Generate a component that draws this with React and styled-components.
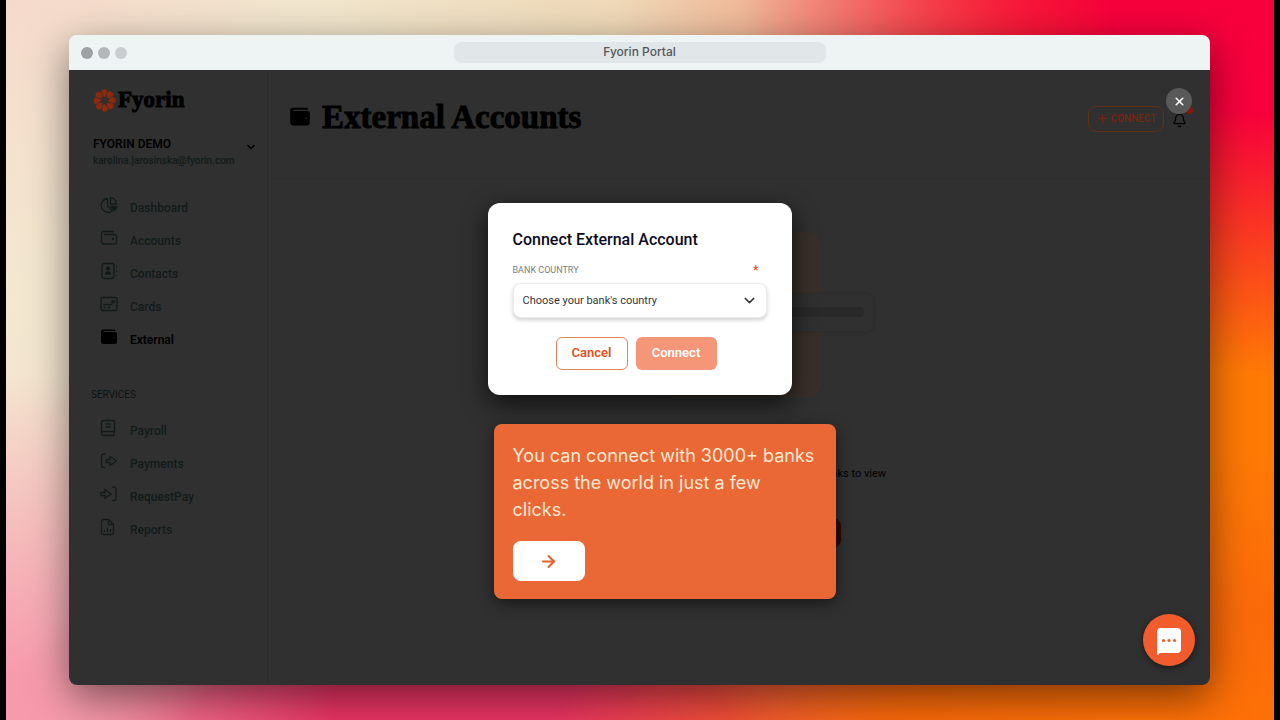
import styled, { createGlobalStyle } from 'styled-components';
import { ArrowRight, Bell, ChevronDown, Plus, X } from 'lucide-react';

const GlobalStyle = createGlobalStyle`
    * {
        box-sizing: border-box;
    }

    body {
        margin: 0;
        font-family: 'Inter', sans-serif;
    }

    button,
    select {
        font-family: inherit;
        margin: 0;
        cursor: pointer;
    }
`;

const Page = styled.div`
    display: flex;
    min-height: 100vh;
    padding: 35px 64px 35px 63px;
    border: solid #000;
    border-width: 0 6px;
    background:
        radial-gradient(ellipse 42% 52% at 100% 0%, #f7003c 0%, #f7003c 30%, rgba(247, 0, 60, 0) 100%),
        radial-gradient(ellipse 26% 48% at 0% 100%, #f79aac 0%, #f79aac 12%, rgba(247, 154, 172, 0) 100%),
        radial-gradient(ellipse 54% 45% at 96% 108%, #ff7405 0%, #fb6a0a 50%, rgba(240, 70, 30, 0) 100%),
        radial-gradient(ellipse 38% 40% at 36% 108%, #ea3464 0%, #ea3464 60%, rgba(234, 52, 100, 0) 100%),
        radial-gradient(ellipse 20% 45% at 0% 42%, #f3e8d0 0%, rgba(243, 232, 208, 0) 100%),
        linear-gradient(100deg, #f6d8cb 0%, #f1e6cd 22%, #efd9b8 44%, #f0a080 60%, #fb5a2c 74%, #ff7a05 88%);
`;

const Window = styled.div`
    display: flex;
    flex-direction: column;
    flex: 1;
    min-width: 0;
    border-radius: 8px;
    box-shadow: 0 12px 40px rgba(0, 0, 0, 0.5);
    overflow: hidden;
`;

const TitleBar = styled.header`
    display: grid;
    grid-template-columns: 1fr minmax(0, 372px) 1fr;
    align-items: center;
    height: 35px;
    padding: 0 12px;
    background: #eef3f4;
`;

const Dots = styled.div`
    display: flex;
    gap: 5px;
`;

const Dot = styled.span`
    width: 12px;
    height: 12px;
    border-radius: 50%;
    background: ${({ $color }) => $color};
`;

const Address = styled.div`
    height: 21px;
    border-radius: 8px;
    background: #e1e6e8;
    color: #53585c;
    font-size: 12px;
    font-weight: 500;
    line-height: 20px;
    text-align: center;
`;

const Body = styled.div`
    position: relative;
    display: grid;
    grid-template-columns: 199px 1fr;
    flex: 1;
    background: #303030;
    font-family: Roboto, sans-serif;
`;

const Sidebar = styled.aside`
    border-right: 1px solid #2b2b2b;
    padding: 17px 10px 0 22px;
`;

const Logo = styled.div`
    display: flex;
    align-items: center;
    gap: 2px;
    height: 26px;
    padding-left: 2px;
    color: #000;
    font-family: 'Liberation Serif', serif;
    font-size: 23px;
    font-weight: 700;
    -webkit-text-stroke: 1px #000;
`;

const Account = styled.div`
    display: flex;
    align-items: flex-start;
    justify-content: space-between;
    margin-top: 22px;
    padding-left: 2px;
    color: #000;

    svg {
        flex: none;
        margin-top: 6px;
    }
`;

const AccountName = styled.div`
    font-size: 12px;
    font-weight: 600;
    line-height: 18px;
`;

const AccountMail = styled.div`
    color: #111b1a;
    font-size: 10px;
    font-weight: 500;
    line-height: 16px;
`;

const Nav = styled.nav`
    display: flex;
    flex-direction: column;
    margin-top: ${({ $top }) => $top}px;
`;

const NavLink = styled.a`
    display: flex;
    align-items: center;
    gap: 12px;
    height: 33px;
    padding-left: 9px;
    color: ${({ $active }) => ($active ? '#000' : '#121b1a')};
    font-size: 12px;
    font-weight: ${({ $active }) => ($active ? 600 : 500)};
    text-decoration: none;

    svg {
        margin-bottom: 6px;
    }
`;

const NavTitle = styled.h2`
    margin: 32px 0 0;
    color: #0c1211;
    font-size: 10px;
    font-weight: 400;
    line-height: 14px;
`;

const Main = styled.main`
    display: flex;
    flex-direction: column;
    min-width: 0;
`;

const Header = styled.div`
    display: flex;
    align-items: center;
    height: 109px;
    padding: 0 23px 15px 21px;
    border-bottom: 1px solid #2e2e2e;
`;

const Title = styled.h1`
    flex: 1;
    margin: 0 0 0 11px;
    color: #000;
    font-family: 'Liberation Serif', serif;
    font-size: 33px;
    font-weight: 700;
    line-height: 40px;
    -webkit-text-stroke: 1px #000;
`;

const HeaderActions = styled.div`
    display: flex;
    align-items: center;
    gap: 8px;
    padding-top: 4px;
`;

const HeaderButton = styled.button`
    display: flex;
    align-items: center;
    justify-content: center;
    gap: 2px;
    width: 76px;
    height: 26px;
    padding: 0;
    border: 1px solid #5f3015;
    border-radius: 8px;
    background: transparent;
    color: #782610;
    font-size: 10px;
    font-weight: 500;
`;

const BellButton = styled.button`
    position: relative;
    display: flex;
    padding: 4px 0 0;
    border: 0;
    background: transparent;
    color: #000;
`;

const BellDot = styled.span`
    position: absolute;
    top: -2px;
    right: -6px;
    width: 7px;
    height: 7px;
    border-radius: 50%;
    background: #86180f;
`;

const Empty = styled.div`
    display: flex;
    flex-direction: column;
    align-items: center;
    padding-top: 53px;
`;

const Picture = styled.div`
    display: flex;
    align-items: center;
    justify-content: center;
    width: 166px;
    height: 166px;
    padding-bottom: 6px;
    border-radius: 16px;
    background: #38302b;
`;

const PictureCard = styled.div`
    display: flex;
    align-items: center;
    flex: none;
    width: 268px;
    height: 37px;
    padding: 0 9px;
    border-radius: 6px;
    background: #303030;
    box-shadow: 0 1px 4px rgba(0, 0, 0, 0.2);
`;

const PictureBar = styled.div`
    flex: 1;
    height: 10px;
    border-radius: 5px;
    background: #292929;
`;

const EmptyText = styled.p`
    width: 294px;
    margin: 67px 0 0;
    color: #000;
    font-size: 11px;
    line-height: 18px;
    text-align: right;
`;

const EmptyButton = styled.div`
    width: 204px;
    height: 30px;
    margin-top: 35px;
    border-radius: 8px;
    background: #2b0905;
`;

const Overlay = styled.div`
    position: absolute;
    inset: 0;
    display: flex;
    flex-direction: column;
    align-items: center;
    padding-top: 133px;
`;

const Stack = styled.div`
    display: flex;
    flex-direction: column;
    gap: 29px;
    width: 304px;
`;

const Dialog = styled.form`
    padding: 25px;
    border-radius: 12px;
    background: #fff;
    box-shadow: 0 8px 24px rgba(0, 0, 0, 0.7);
`;

const DialogTitle = styled.h2`
    margin: 0;
    color: #0b0b1c;
    font-size: 16px;
    font-weight: 500;
    line-height: 24px;
`;

const FieldLabel = styled.label`
    display: flex;
    justify-content: space-between;
    margin: 10px 0 5px;
    padding-right: 8px;
    color: #77817f;
    font-size: 9px;
    line-height: 16px;
`;

const Required = styled.span`
    color: #e2562a;
    font-size: 12px;
    font-weight: 700;
`;

const SelectBox = styled.div`
    position: relative;
    color: #33363b;

    svg {
        position: absolute;
        top: 9px;
        right: 9px;
        pointer-events: none;
    }
`;

const Select = styled.select`
    display: block;
    width: 100%;
    height: 35px;
    padding: 0 32px 0 9px;
    border: 1px solid #ececec;
    border-radius: 8px;
    background: #fff;
    box-shadow: 0 2px 4px rgba(0, 0, 0, 0.2);
    color: #33363d;
    font-size: 11px;
    font-weight: 400;
    appearance: none;
`;

const Actions = styled.div`
    display: flex;
    justify-content: center;
    gap: 8px;
    margin-top: 19px;
    padding-right: 7px;
`;

const Button = styled.button`
    width: ${({ $primary }) => ($primary ? 81 : 72)}px;
    height: 33px;
    padding: 0 0 2px;
    border: ${({ $primary }) => ($primary ? '0' : '1px solid #d9865c')};
    border-radius: 6px;
    background: ${({ $primary }) => ($primary ? '#f59678' : '#fff')};
    color: ${({ $primary }) => ($primary ? '#fff' : '#d9531e')};
    font-size: 13px;
    font-weight: 600;
`;

const Hint = styled.section`
    width: 342px;
    margin-left: 6px;
    padding: 18px 18px 18px 19px;
    border-radius: 8px;
    background: #ea6736;
    box-shadow: 0 4px 14px rgba(0, 0, 0, 0.5);
`;

const HintText = styled.p`
    margin: 0 0 18px;
    color: #ffe9d2;
    font-family: 'Inter', sans-serif;
    font-size: 18px;
    font-weight: 400;
    line-height: 27px;
`;

const NextButton = styled.button`
    display: flex;
    align-items: center;
    justify-content: center;
    width: 72px;
    height: 40px;
    border: 0;
    border-radius: 8px;
    background: #fff;
    color: #e2602e;
`;

const CloseButton = styled.button`
    position: absolute;
    top: 18px;
    right: 18px;
    display: flex;
    align-items: center;
    justify-content: center;
    width: 26px;
    height: 26px;
    padding: 0;
    border: 0;
    border-radius: 50%;
    background: #595959;
    color: #fff;
`;

const ChatButton = styled.button`
    position: absolute;
    right: 15px;
    bottom: 19px;
    display: flex;
    align-items: center;
    justify-content: center;
    width: 52px;
    height: 52px;
    padding: 0;
    border: 0;
    border-radius: 50%;
    background: #f05c2b;
    box-shadow: 0 2px 6px rgba(0, 0, 0, 0.5);
`;

const shapes = {
    dashboard: (
        <>
            <path d="M7.500 2.500a7 7 0 1 0 5 12.500L7.500 9.500Z" />
            <path d="M10.500 1.500v6.500h6A6.500 6.500 0 0 0 10.500 1.500Z" />
            <path d="M11 10.500h6a6 6 0 0 1-2.500 4Z" fill="currentColor" />
        </>
    ),
    accounts: (
        <>
            <path d="M14 2.500H3.500a2 2 0 0 0-2 2v8.500a2 2 0 0 0 2 2h11a2 2 0 0 0 2-2V7.500a2 2 0 0 0-2-2H4" />
            <circle cx="13" cy="10" r=".5" fill="currentColor" />
        </>
    ),
    contacts: (
        <>
            <rect x="2" y="1.500" width="12" height="15" rx="2" />
            <circle cx="8" cy="6.500" r="1.500" fill="currentColor" />
            <path d="M5.500 12a2.500 2 0 0 1 5 0Z" fill="currentColor" />
            <path d="M16.500 4v1.500M16.500 8.500V10M16.500 13v1" />
        </>
    ),
    cards: (
        <>
            <rect x="1" y="2.500" width="16" height="13" rx="1.500" />
            <path d="M12 6h2.500v1.500H12ZM3.500 9.500h9M3.500 12.500h2M7.500 12.500h3" />
        </>
    ),
    payroll: (
        <>
            <path d="M14 16.500H3.500a2 2 0 0 1-2-2v-11a2 2 0 0 1 2-2h9.500a1.500 1.500 0 0 1 1.500 1.500v9.500h-11a2 2 0 0 0-2 2M14 12.500v4" />
            <path d="M5.500 5h5.500M5.500 8h5.500" />
        </>
    ),
    payments: (
        <>
            <path d="M5.500 2H4a2.500 2.500 0 0 0-2.500 2.500v8.500A2.500 2.500 0 0 0 4 15.500h1.500" />
            <path d="M6 7.500h4V4.500L16.500 9 10 13.500v-3H6Z" />
        </>
    ),
    request: (
        <>
            <path d="M12 2h2a2 2 0 0 1 2 2v9.500a2 2 0 0 1-2 2h-2" />
            <path d="M1 7.500h4V4.500L11 9l-6 4.500v-3H1Z" />
        </>
    ),
    reports: (
        <>
            <path d="M8.500 1.500h-5a2 2 0 0 0-2 2v11a2 2 0 0 0 2 2h8a2 2 0 0 0 2-2V6.500ZM8.500 1.500v5h5" />
            <path d="M4.500 14v-2M7.500 14v-4M10.500 14v-3" />
        </>
    ),
};

const menu = [
    { label: 'Dashboard', icon: 'dashboard' },
    { label: 'Accounts', icon: 'accounts' },
    { label: 'Contacts', icon: 'contacts' },
    { label: 'Cards', icon: 'cards' },
    { label: 'External', icon: 'wallet', active: true },
];

const services = [
    { label: 'Payroll', icon: 'payroll' },
    { label: 'Payments', icon: 'payments' },
    { label: 'RequestPay', icon: 'request' },
    { label: 'Reports', icon: 'reports' },
];

function Wallet({ size }) {
    return (
        <svg width={size} height={size} viewBox="0 0 18 18" aria-hidden="true">
            <path
                d="M3 1.500h11.500a1 1 0 0 1 1 1V3H3.500v1H15a2 2 0 0 1 2 2v8a2 2 0 0 1-2 2H3a2 2 0 0 1-2-2v-10.500a2 2 0 0 1 2-2Z"
                fill="#000"
            />
            <circle cx="14" cy="10" r=".6" fill="#303030" />
        </svg>
    );
}

function NavIcon({ name }) {
    if (name === 'wallet') return <Wallet size={18} />;

    return (
        <svg
            width="18"
            height="18"
            viewBox="0 0 18 18"
            fill="none"
            stroke="currentColor"
            strokeWidth="1.300"
            strokeLinejoin="round"
            aria-hidden="true"
        >
            {shapes[name]}
        </svg>
    );
}

function Flower() {
    return (
        <svg width="23" height="23" viewBox="0 0 24 24" aria-hidden="true">
            {[0, 45, 90, 135, 180, 225, 270, 315].map((angle) => (
                <path
                    key={angle}
                    d="M12.500 9 8.300 5.200A3.800 3.800 0 1 1 15.600 4.500Z"
                    fill="#8c2a10"
                    stroke="#303030"
                    strokeWidth=".5"
                    transform={`rotate(${angle} 12 12)`}
                />
            ))}
        </svg>
    );
}

function NavList({ items, top }) {
    return (
        <Nav $top={top}>
            {items.map((item) => (
                <NavLink key={item.label} href="#" $active={item.active}>
                    <NavIcon name={item.icon} />
                    {item.label}
                </NavLink>
            ))}
        </Nav>
    );
}

function ConnectDialog() {
    return (
        <Dialog onSubmit={(e) => e.preventDefault()}>
            <DialogTitle>Connect External Account</DialogTitle>
            <FieldLabel htmlFor="country">
                BANK COUNTRY
                <Required>*</Required>
            </FieldLabel>
            <SelectBox>
                <Select id="country" defaultValue="">
                    <option value="">Choose your bank's country</option>
                </Select>
                <ChevronDown size={17} strokeWidth={2} />
            </SelectBox>
            <Actions>
                <Button type="button">Cancel</Button>
                <Button type="submit" $primary>
                    Connect
                </Button>
            </Actions>
        </Dialog>
    );
}

function App() {
    return (
        <Page>
            <GlobalStyle />
            <Window>
                <TitleBar>
                    <Dots>
                        <Dot $color="#9da1a3" />
                        <Dot $color="#b3b7b9" />
                        <Dot $color="#c9cdcf" />
                    </Dots>
                    <Address>Fyorin Portal</Address>
                </TitleBar>
                <Body>
                    <Sidebar>
                        <Logo>
                            <Flower />
                            Fyorin
                        </Logo>
                        <Account>
                            <div>
                                <AccountName>FYORIN DEMO</AccountName>
                                <AccountMail>karolina.jarosinska@fyorin.com</AccountMail>
                            </div>
                            <ChevronDown size={12} strokeWidth={3} />
                        </Account>
                        <NavList items={menu} top={22} />
                        <NavTitle>SERVICES</NavTitle>
                        <NavList items={services} top={12} />
                    </Sidebar>
                    <Main>
                        <Header>
                            <Wallet size={22} />
                            <Title>External Accounts</Title>
                            <HeaderActions>
                                <HeaderButton type="button">
                                    <Plus size={13} />
                                    CONNECT
                                </HeaderButton>
                                <BellButton type="button" aria-label="Notifications">
                                    <Bell size={15} strokeWidth={2} />
                                    <BellDot />
                                </BellButton>
                            </HeaderActions>
                        </Header>
                        <Empty>
                            <Picture>
                                <PictureCard>
                                    <PictureBar />
                                </PictureCard>
                            </Picture>
                            <EmptyText>banks to view</EmptyText>
                            <EmptyButton />
                        </Empty>
                    </Main>
                    <Overlay>
                        <Stack>
                            <ConnectDialog />
                            <Hint>
                                <HintText>
                                    You can connect with 3000+ banks across the world in just a few clicks.
                                </HintText>
                                <NextButton type="button" aria-label="Next">
                                    <ArrowRight size={19} strokeWidth={2.5} />
                                </NextButton>
                            </Hint>
                        </Stack>
                        <CloseButton type="button" aria-label="Close">
                            <X size={13} strokeWidth={3} />
                        </CloseButton>
                        <ChatButton type="button" aria-label="Chat">
                            <svg width="28" height="30" viewBox="0 0 28 30" aria-hidden="true">
                                <path d="M6 3h16a4 4 0 0 1 4 4v17a4 4 0 0 1-4 4H5l-3 3V7a4 4 0 0 1 4-4Z" fill="#fff" />
                                <circle cx="8.500" cy="15.500" r="1.600" fill="#f05c2b" />
                                <circle cx="14" cy="15.500" r="1.600" fill="#f05c2b" />
                                <circle cx="19.500" cy="15.500" r="1.600" fill="#f05c2b" />
                            </svg>
                        </ChatButton>
                    </Overlay>
                </Body>
            </Window>
        </Page>
    );
}

export default App;
